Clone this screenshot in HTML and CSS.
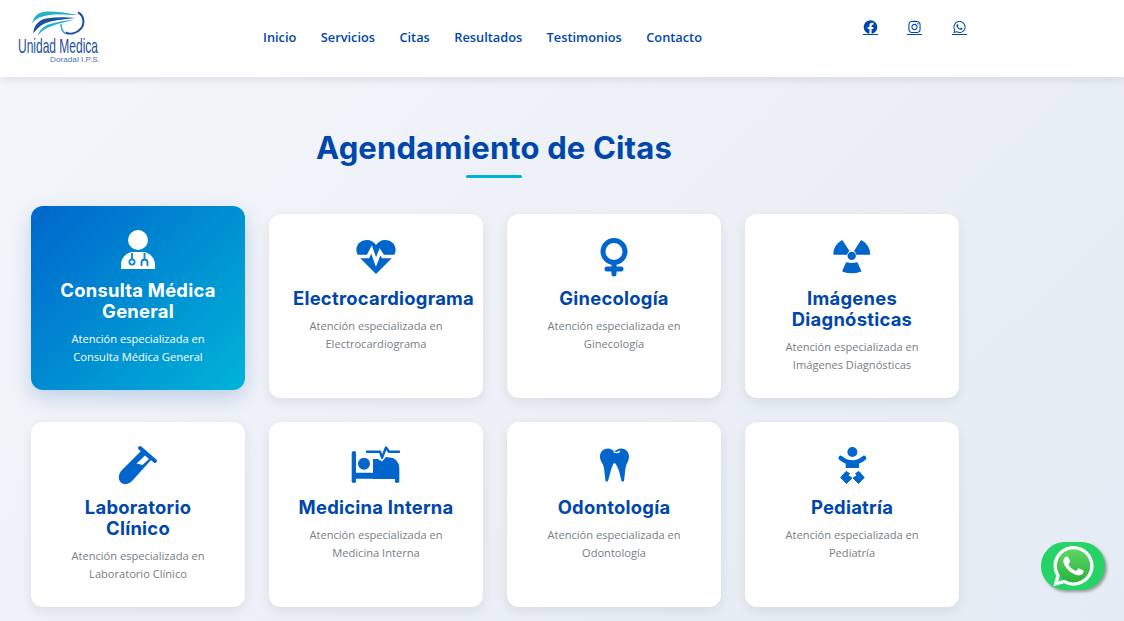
FILE: index.html
```html
<!DOCTYPE html>
<html lang="es">
<head>
  <meta charset="UTF-8">
  <meta name="viewport" content="width=device-width, initial-scale=1.0">
  <title>Unidad Medica Doradal I.P.S.</title>
  <link rel="stylesheet" href="styles.css">
</head>
<body>

  <!-- Header -->
  <header class="site-header">
    <a class="logo" href="#">
      <svg viewBox="17 10 84 54" width="84" height="54">
        <path d="M32.3 23.5 C33 17 38 12 46 11.5 C56 11 68 13 78 15 C68 15 58 14 50 15 C42 16 36 18 32.3 23.5Z" fill="#22b3c9"/>
        <path d="M33.5 33.5 C33 27 38 20 46 18.5 C56 17 66 17 75 18 C66 19 56 20 49 22 C42 24 37 28 33.5 33.5Z" fill="#1c4fa0"/>
        <path d="M38 35.5 C39 30 44 26 50 24 C58 22 66 20 74 20 C66 21.5 58 23.5 52 26 C46 28 41 31 38 35.5Z" fill="#22b3c9"/>
        <path class="logo-arc" d="M78 12.5 C84 15 85 24 81 28.5 C77 33 71 35 65.5 32.5"/>
        <path class="logo-arc-light" d="M61 24 C61 28 62 31 65 33.5"/>
        <text class="logo-name" x="18" y="53" textLength="80" lengthAdjust="spacingAndGlyphs">Unidad Medica</text>
        <text class="logo-sub" x="50" y="62" textLength="50" lengthAdjust="spacingAndGlyphs">Doradal I.P.S.</text>
      </svg>
    </a>

    <nav class="main-nav">
      <a href="#">Inicio</a>
      <a href="#">Servicios</a>
      <a href="#">Citas</a>
      <a href="#">Resultados</a>
      <a href="#">Testimonios</a>
      <a href="#">Contacto</a>
    </nav>

    <div class="social-links">
      <a href="#">
        <svg viewBox="0 0 512 512"><path d="M504 256C504 119 393 8 256 8S8 119 8 256c0 123.78 90.69 226.38 209.25 245V327.69h-63V256h63v-54.64c0-62.15 37-96.48 93.67-96.48 27.14 0 55.52 4.84 55.52 4.84v61h-31.28c-30.8 0-40.41 19.12-40.41 38.73V256h68.78l-11 71.69h-57.78V501C413.31 482.38 504 379.78 504 256z"/></svg>
      </a>
      <a href="#">
        <svg viewBox="0 0 448 512"><path d="M224.1 141c-63.6 0-114.9 51.3-114.9 114.9s51.3 114.9 114.9 114.9S339 319.5 339 255.9 287.7 141 224.1 141zm0 189.6c-41.1 0-74.7-33.5-74.7-74.7s33.5-74.7 74.7-74.7 74.7 33.5 74.7 74.7-33.6 74.7-74.7 74.7zm146.4-194.3c0 14.9-12 26.8-26.8 26.8-14.9 0-26.8-12-26.8-26.8s12-26.8 26.8-26.8 26.8 12 26.8 26.8zm76.1 27.2c-1.7-35.9-9.9-67.7-36.2-93.9-26.2-26.2-58-34.4-93.9-36.2-37-2.1-147.9-2.1-184.9 0-35.8 1.7-67.6 9.9-93.9 36.1s-34.4 58-36.2 93.9c-2.1 37-2.1 147.9 0 184.9 1.7 35.9 9.9 67.7 36.2 93.9s58 34.4 93.9 36.2c37 2.1 147.9 2.1 184.9 0 35.9-1.7 67.7-9.9 93.9-36.2 26.2-26.2 34.4-58 36.2-93.9 2.1-37 2.1-147.8 0-184.8zM398.8 388c-7.8 19.6-22.9 34.7-42.6 42.6-29.5 11.7-99.5 9-132.1 9s-102.7 2.6-132.1-9c-19.6-7.8-34.7-22.9-42.6-42.6-11.7-29.5-9-99.5-9-132.1s-2.6-102.7 9-132.1c7.8-19.6 22.9-34.7 42.6-42.6 29.5-11.7 99.5-9 132.1-9s102.7-2.6 132.1 9c19.6 7.8 34.7 22.9 42.6 42.6 11.7 29.5 9 99.5 9 132.1s2.7 102.7-9 132.1z"/></svg>
      </a>
      <a href="#">
        <svg viewBox="0 0 448 512"><path d="M380.9 97.1C339 55.1 283.2 32 223.9 32c-122.4 0-222 99.6-222 222 0 39.1 10.2 77.3 29.6 111L0 480l117.7-30.9c32.4 17.7 68.9 27 106.1 27h.1c122.3 0 224.1-99.6 224.1-222 0-59.3-25.2-115-67.1-157zm-157 341.6c-33.2 0-65.7-8.9-94-25.7l-6.7-4-69.8 18.3L72 359.2l-4.4-7c-18.5-29.4-28.2-63.3-28.2-98.2 0-101.7 82.8-184.5 184.6-184.5 49.3 0 95.6 19.2 130.4 54.1 34.8 34.9 56.2 81.2 56.1 130.5 0 101.8-84.9 184.6-186.6 184.6zm101.2-138.2c-5.5-2.8-32.8-16.2-37.9-18-5.1-1.9-8.8-2.8-12.5 2.8-3.7 5.6-14.3 18-17.6 21.8-3.2 3.7-6.5 4.2-12 1.4-32.6-16.3-54-29.1-75.5-66-5.7-9.8 5.7-9.1 16.3-30.3 1.8-3.7.9-6.9-.5-9.7-1.4-2.8-12.5-30.1-17.1-41.2-4.5-10.8-9.1-9.3-12.5-9.5-3.2-.2-6.9-.2-10.6-.2-3.7 0-9.7 1.4-14.8 6.9-5.1 5.6-19.4 19-19.4 46.3 0 27.3 19.9 53.7 22.6 57.4 2.8 3.7 39.1 59.7 94.8 83.8 35.2 15.2 49 16.5 66.6 13.9 10.7-1.6 32.8-13.4 37.4-26.4 4.6-13 4.6-24.1 3.2-26.4-1.3-2.5-5-3.9-10.5-6.6z"/></svg>
      </a>
    </div>
  </header>

  <!-- Services -->
  <main class="services">
    <h1 class="section-title">Agendamiento de Citas</h1>
    <div class="title-line"></div>

    <div class="service-grid">

      <div class="service-card active">
        <div class="card-icon">
          <svg width="34" height="39" viewBox="0 0 34 39">
            <circle cx="17" cy="10" r="10"/>
            <path d="M11 22 H23 C29 23 34 28 34 35 V39 H0 V35 C0 28 5 23 11 22Z"/>
            <circle class="steth" cx="11" cy="32" r="2.6"/>
            <path class="steth" d="M11 23 V29 M23.5 23 V29.5 M20.5 36 V33 Q20.5 29.5 23.5 29.5 Q26.5 29.5 26.5 33 V36"/>
          </svg>
        </div>
        <h3>Consulta Médica General</h3>
        <p>Atención especializada en Consulta Médica General</p>
      </div>

      <div class="service-card">
        <div class="card-icon">
          <svg width="40" height="34" viewBox="0 0 40 34">
            <path d="M20 34 L3 17 C-3 9 2 0 11 0 C15 0 18 2 20 5 C22 2 25 0 29 0 C38 0 43 9 37 17Z"/>
            <path class="pulse" d="M0 16.5 H12 L15.5 9.5 L20 22 L24 12 L27 16.5 H40"/>
          </svg>
        </div>
        <h3>Electrocardiograma</h3>
        <p>Atención especializada en Electrocardiograma</p>
      </div>

      <div class="service-card">
        <div class="card-icon">
          <svg width="28" height="38" viewBox="0 0 28 38">
            <circle class="ring" cx="14" cy="13.5" r="11"/>
            <path class="ring" d="M14 25 V36 M7 31 H21" stroke-linecap="round"/>
          </svg>
        </div>
        <h3>Ginecología</h3>
        <p>Atención especializada en Ginecología</p>
      </div>

      <div class="service-card">
        <div class="card-icon">
          <svg width="40" height="36" viewBox="0 0 40 36">
            <circle cx="19.7" cy="16.9" r="4.2"/>
            <path class="blade" d="M10 2 L16.5 12 Q15 13 14.7 15 L2 15 Q2 7 10 2Z"/>
            <path class="blade" d="M29.4 2 L22.9 12 Q24.4 13 24.7 15 L37.4 15 Q37.4 7 29.4 2Z"/>
            <path class="blade" d="M14.5 24 Q19.7 25.5 25 24 L28.5 32 Q19.7 35 11 32Z"/>
          </svg>
        </div>
        <h3>Imágenes Diagnósticas</h3>
        <p>Atención especializada en Imágenes Diagnósticas</p>
      </div>

      <div class="service-card">
        <div class="card-icon">
          <svg width="39" height="39" viewBox="1 0 39 39">
            <path class="vial-rim" d="M22 2 L37 15"/>
            <path d="M24 4 L34 13 L14 35 C10 39 5 39 2.5 36 C0 33 0 28 4 24Z"/>
            <path class="vial-glass" d="M27 9.5 L31 13 L24.5 19 L18.5 17.5Z"/>
          </svg>
        </div>
        <h3>Laboratorio Clínico</h3>
        <p>Atención especializada en Laboratorio Clínico</p>
      </div>

      <div class="service-card">
        <div class="card-icon">
          <svg width="49" height="38" viewBox="1 0 49 38">
            <path d="M3 5 Q5 5 5 7 V26.7 H44 V32.7 H48.3 V36 Q46 38 44 36 V32.7 H5 V36 Q3 38 .7 36 V7 Q1 5 3 5Z"/>
            <circle cx="13" cy="17.7" r="6"/>
            <path d="M22 27 V13 H27 L31 15.5 L35 11 L42 12 Q48 15 48.3 22 V33 H22Z"/>
            <path class="bed-pulse" d="M16 5.7 H29 L31 11.7 L35 1.5 L38 5.7 H48"/>
          </svg>
        </div>
        <h3>Medicina Interna</h3>
        <p>Atención especializada en Medicina Interna</p>
      </div>

      <div class="service-card">
        <div class="card-icon">
          <svg width="29" height="34" viewBox="0 0 29 34">
            <path d="M8 .5 C11 .5 12 2 14.5 3 C17 2 18 .5 21 .5 C26 .5 29 4 29 9 C29 13 26 16 25.5 20 L24 33 Q23 34 21.5 33 L19 23 Q16 15 14.5 15 Q13 15 11 22 L8 33 Q6.5 34 5.5 33 L4 20 C3.5 16 0 13 0 9 C0 4 3 .5 8 .5Z"/>
            <path class="tooth-notch" d="M13.5 3.5 Q17 6 20 3"/>
          </svg>
        </div>
        <h3>Odontología</h3>
        <p>Atención especializada en Odontología</p>
      </div>

      <div class="service-card">
        <div class="card-icon">
          <svg width="29" height="37" viewBox="0 0 29 37">
            <circle cx="14.4" cy="5" r="5"/>
            <path class="baby-arms" d="M2.7 11 Q8 15.5 14.4 15.5 Q21 15.5 26 11"/>
            <path d="M7.7 14 H21 V21 H7.7Z"/>
            <path class="baby-foot" d="M8 24.5 L2.7 30.5 L8.5 36.5 L14 31 L10 28.5 L11.5 26.5Z"/>
            <path class="baby-foot" d="M21 24.5 L26.2 30.5 L20.5 36.5 L15 31 L19 28.5 L17.5 26.5Z"/>
          </svg>
        </div>
        <h3>Pediatría</h3>
        <p>Atención especializada en Pediatría</p>
      </div>

    </div>
  </main>

  <!-- Floating WhatsApp button -->
  <a class="whatsapp-float" href="#">
    <svg width="45" height="46" viewBox="0 0 448 512">
      <defs>
        <linearGradient id="wa-green" x1="0" y1="0" x2="0" y2="1">
          <stop offset="0" stop-color="#5fd668"/>
          <stop offset="1" stop-color="#27b23c"/>
        </linearGradient>
      </defs>
      <circle cx="224" cy="254" r="192" fill="url(#wa-green)"/>
      <path fill="#fff" d="M380.9 97.1C339 55.1 283.2 32 223.9 32c-122.4 0-222 99.6-222 222 0 39.1 10.2 77.3 29.6 111L0 480l117.7-30.9c32.4 17.7 68.9 27 106.1 27h.1c122.3 0 224.1-99.6 224.1-222 0-59.3-25.2-115-67.1-157zm-157 341.6c-33.2 0-65.7-8.9-94-25.7l-6.7-4-69.8 18.3L72 359.2l-4.4-7c-18.5-29.4-28.2-63.3-28.2-98.2 0-101.7 82.8-184.5 184.6-184.5 49.3 0 95.6 19.2 130.4 54.1 34.8 34.9 56.2 81.2 56.1 130.5 0 101.8-84.9 184.6-186.6 184.6zm101.2-138.2c-5.5-2.8-32.8-16.2-37.9-18-5.1-1.9-8.8-2.8-12.5 2.8-3.7 5.6-14.3 18-17.6 21.8-3.2 3.7-6.5 4.2-12 1.4-32.6-16.3-54-29.1-75.5-66-5.7-9.8 5.7-9.1 16.3-30.3 1.8-3.7.9-6.9-.5-9.7-1.4-2.8-12.5-30.1-17.1-41.2-4.5-10.8-9.1-9.3-12.5-9.5-3.2-.2-6.9-.2-10.6-.2-3.7 0-9.7 1.4-14.8 6.9-5.1 5.6-19.4 19-19.4 46.3 0 27.3 19.9 53.7 22.6 57.4 2.8 3.7 39.1 59.7 94.8 83.8 35.2 15.2 49 16.5 66.6 13.9 10.7-1.6 32.8-13.4 37.4-26.4 4.6-13 4.6-24.1 3.2-26.4-1.3-2.5-5-3.9-10.5-6.6z"/>
    </svg>
  </a>

</body>
</html>
```

FILE: styles.css
```css
/* Basic page styling */
html {
  overflow: hidden;
}
body {
  font-family: "Open Sans", sans-serif;
  background: linear-gradient(135deg, #f4f6fa 0%, #e4ebf4 100%);
  margin: 0;
  height: 100vh;
  overflow: hidden;
}
/* Header styling */
.site-header {
  display: flex;
  height: 77px;
  background-color: #fff;
  box-shadow: 0 2px 10px rgba(0, 0, 0, 0.1);
}
.logo {
  display: block;
  width: 84px;
  height: 54px;
  margin: 10px 0 0 17px;
}
.logo svg {
  display: block;
  overflow: visible;
}
.logo-name {
  font-family: "Liberation Sans", sans-serif;
  font-size: 21px;
  fill: #1c4fa0;
}
.logo-sub {
  font-family: "Liberation Sans", sans-serif;
  font-size: 7px;
  fill: #4a75b5;
}
.logo-arc {
  fill: none;
  stroke: #1c4fa0;
  stroke-width: 2;
}
.logo-arc-light {
  fill: none;
  stroke: #22b3c9;
  stroke-width: 1.5;
}
.main-nav {
  display: flex;
  align-items: center;
  gap: 24.4px;
  margin-left: 162px;
  height: 74px;
}
.main-nav a {
  color: #0047ab;
  font-size: 12.8px;
  font-weight: 600;
  text-decoration: none;
}
.social-links {
  display: flex;
  gap: 29.5px;
  margin: 20px 0 0 161px;
}
.social-links a {
  display: block;
  width: 15px;
  height: 14px;
  border-bottom: 1px solid #0047ab;
  fill: #0047ab;
}
.social-links svg {
  display: block;
  width: 15px;
  height: 14px;
}
/* Services section */
.services {
  width: 926px;
  margin-left: 31px;
  padding-top: 50px;
}
.section-title {
  margin: 0;
  font-family: Inter, sans-serif;
  font-size: 31px;
  font-weight: 700;
  letter-spacing: 0.15px;
  line-height: 42px;
  color: #0047ab;
  text-align: center;
}
.title-line {
  width: 56px;
  height: 3px;
  margin: 6px auto 36px;
  border-radius: 2px;
  background-color: #00b4d8;
}
.service-grid {
  display: grid;
  grid-template-columns: repeat(4, 214px);
  gap: 24px;
}
.service-card {
  padding: 24px;
  border-radius: 12px;
  background-color: #fff;
  box-shadow: 0 4px 12px rgba(0, 0, 0, 0.08);
  text-align: center;
}
.service-card h3 {
  margin: 0 0 8px;
  font-family: Inter, sans-serif;
  font-size: 18.4px;
  font-weight: 700;
  letter-spacing: 0.25px;
  line-height: 21.05px;
  color: #0047ab;
}
.service-card p {
  margin: 0;
  font-size: 11.1px;
  line-height: 18px;
  color: #777e85;
}
.card-icon {
  display: flex;
  justify-content: center;
  align-items: center;
  height: 38px;
  margin-bottom: 12.3px;
  fill: #0066cc;
}
.card-icon svg {
  display: block;
  overflow: visible;
}
/* Highlighted card */
.service-card.active {
  background: linear-gradient(135deg, #0066cc 0%, #00b4d8 100%);
  box-shadow: 0 8px 20px rgba(0, 71, 171, 0.2);
  transform: translateY(-8px);
}
.service-card.active h3,
.service-card.active p {
  color: #fff;
}
.service-card.active .card-icon {
  fill: #fff;
}
/* Icon strokes */
.steth {
  fill: none;
  stroke: #0a85cf;
  stroke-width: 1.8;
}
.pulse {
  fill: none;
  stroke: #fff;
  stroke-width: 3.4;
}
.ring {
  fill: none;
  stroke: #0066cc;
  stroke-width: 5;
}
.blade {
  stroke: #0066cc;
  stroke-width: 1.5;
  stroke-linejoin: round;
}
.vial-rim {
  fill: none;
  stroke: #0066cc;
  stroke-width: 4;
  stroke-linecap: round;
}
.vial-glass {
  fill: #fff;
}
.bed-pulse {
  fill: none;
  stroke: #0066cc;
  stroke-width: 2.4;
  stroke-linecap: round;
  stroke-linejoin: round;
}
.tooth-notch {
  fill: none;
  stroke: #fff;
  stroke-width: 1.3;
}
.baby-arms {
  fill: none;
  stroke: #0066cc;
  stroke-width: 4.5;
  stroke-linecap: round;
}
.baby-foot {
  stroke: #0066cc;
  stroke-width: 1;
  stroke-linejoin: round;
}
/* Floating WhatsApp button */
.whatsapp-float {
  position: fixed;
  left: 1041px;
  top: 542px;
  display: flex;
  justify-content: center;
  align-items: center;
  width: 64px;
  height: 48px;
  border-radius: 50px;
  background-color: #25d366;
  box-shadow: 2px 2px 3px #999;
}
```
